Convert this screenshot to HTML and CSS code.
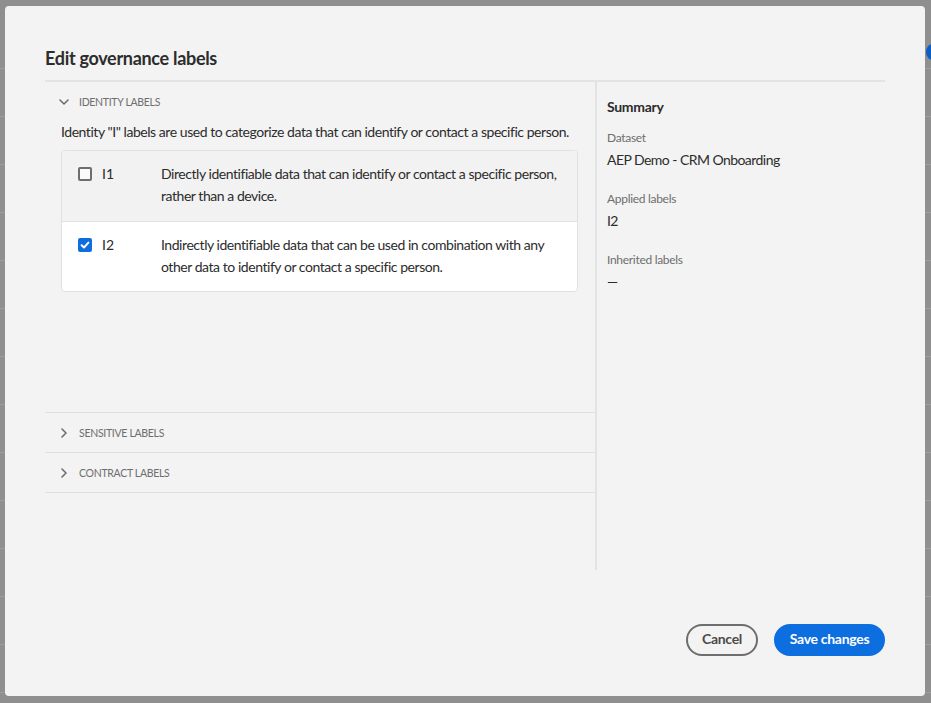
FILE: index.html
```html
<!DOCTYPE html>
<html lang="en">
<head>
<meta charset="utf-8">
<title>Edit governance labels</title>
<link rel="stylesheet" href="styles.css">
</head>
<body>
<div class="backdrop-dot"></div>
<div class="dialog">
  <h1 class="title">Edit governance labels</h1>
  <div class="content">
    <div class="labels">
      <section class="group group-open">
        <div class="group-head">
          <svg class="chev" width="10" height="10" viewBox="0 0 10 10"><path d="M1 3 L5 7 L9 3" fill="none" stroke="#6e6e6e" stroke-width="1.6" stroke-linecap="round" stroke-linejoin="round"/></svg>
          <span class="group-name">IDENTITY LABELS</span>
        </div>
        <div class="group-body">
          <p class="group-desc">Identity "I" labels are used to categorize data that can identify or contact a specific person.</p>
          <div class="table">
            <div class="row row-hover">
              <span class="check"></span>
              <span class="code">I1</span>
              <span class="desc">Directly identifiable data that can identify or contact a specific person, rather than a device.</span>
            </div>
            <div class="row">
              <span class="check check-on"><svg width="10" height="10" viewBox="0 0 10 10"><path d="M1.6 5.2 L4 7.5 L8.4 2.6" fill="none" stroke="#fff" stroke-width="1.9" stroke-linecap="round" stroke-linejoin="round"/></svg></span>
              <span class="code">I2</span>
              <span class="desc">Indirectly identifiable data that can be used in combination with any other data to identify or contact a specific person.</span>
            </div>
          </div>
        </div>
      </section>
      <section class="group">
        <div class="group-head">
          <svg class="chev" width="10" height="10" viewBox="0 0 10 10"><path d="M3 1 L7 5 L3 9" fill="none" stroke="#6e6e6e" stroke-width="1.6" stroke-linecap="round" stroke-linejoin="round"/></svg>
          <span class="group-name">SENSITIVE LABELS</span>
        </div>
      </section>
      <section class="group">
        <div class="group-head">
          <svg class="chev" width="10" height="10" viewBox="0 0 10 10"><path d="M3 1 L7 5 L3 9" fill="none" stroke="#6e6e6e" stroke-width="1.6" stroke-linecap="round" stroke-linejoin="round"/></svg>
          <span class="group-name">CONTRACT LABELS</span>
        </div>
      </section>
    </div>
    <aside class="summary">
      <h2 class="summary-title">Summary</h2>
      <div class="field">
        <div class="field-label">Dataset</div>
        <div class="field-value">AEP Demo - CRM Onboarding</div>
      </div>
      <div class="field">
        <div class="field-label">Applied labels</div>
        <div class="field-value">I2</div>
      </div>
      <div class="field">
        <div class="field-label">Inherited labels</div>
        <div class="field-value">—</div>
      </div>
    </aside>
  </div>
  <div class="footer">
    <button class="btn btn-secondary">Cancel</button>
    <button class="btn btn-primary">Save changes</button>
  </div>
</div>
</body>
</html>
```

FILE: styles.css
```css
* { box-sizing: border-box; }

html, body {
  margin: 0;
  height: 703px;
  overflow: hidden;
}

body {
  font-family: Lato, "Open Sans", sans-serif;
  color: #2c2c2c;
  background-color: #8f8f8f;
  background-image: repeating-linear-gradient(to bottom, transparent 0 47px, #9e9e9e 47px 48px);
  background-position: 0 21px;
  display: flex;
  align-items: flex-start;
  position: relative;
}

.backdrop-dot {
  position: absolute;
  left: 926px;
  top: 44px;
  width: 14px;
  height: 16px;
  border-radius: 50%;
  background: #0b5fc4;
}

.dialog {
  width: 920px;
  height: 690px;
  margin: 6px 0 0 5px;
  background: #f3f3f3;
  border-radius: 4px;
  padding: 40px 40px 40px 40px;
  display: flex;
  flex-direction: column;
  position: relative;
  z-index: 1;
}

.title {
  margin: 0;
  font-size: 18px;
  line-height: 24px;
  font-weight: 700;
  letter-spacing: -0.3px;
  color: #2c2c2c;
  padding-bottom: 10px;
  border-bottom: 2px solid #e3e3e3;
}

.content {
  display: flex;
  height: 488px;
}

.labels {
  width: 552px;
  border-right: 2px solid #e3e3e3;
  display: flex;
  flex-direction: column;
}

.group {
  border-bottom: 1px solid #dedede;
}

.group-head {
  height: 39px;
  display: flex;
  align-items: center;
  padding-left: 14px;
  gap: 10px;
}

.group-open .group-head { height: 40px; }

.chev { flex: none; }

.group-name {
  font-size: 10.5px;
  color: #6e6e6e;
  letter-spacing: -0.3px;
}

.group-body {
  height: 290px;
  padding: 0 17px 0 16px;
}

.group-desc {
  margin: 0 0 8px;
  font-size: 14px;
  line-height: 20px;
  letter-spacing: -0.45px;
}

.table {
  border: 1px solid #e1e1e1;
  border-radius: 4px;
  background: #fff;
  overflow: hidden;
}

.row {
  display: flex;
  align-items: flex-start;
  padding: 13px 16px 13px 16px;
  border-top: 1px solid #e1e1e1;
  min-height: 70px;
}

.row:first-child { border-top: 0; }

.row-hover { background: #f2f2f2; }

.check {
  flex: none;
  width: 14px;
  height: 14px;
  margin-top: 3px;
  border: 2px solid #6e6e6e;
  border-radius: 2px;
  background: #fafafa;
  display: flex;
  align-items: center;
  justify-content: center;
}

.check-on {
  background: #0d6ee0;
  border-color: #0d6ee0;
}

.code {
  flex: none;
  width: 59px;
  margin-left: 10px;
  font-size: 14px;
  line-height: 20px;
}

.desc {
  font-size: 14px;
  line-height: 22px;
  margin-top: -1px;
  letter-spacing: -0.45px;
}

.summary {
  flex: 1;
  padding: 15px 0 0 10px;
}

.summary-title {
  margin: 0 0 12px;
  font-size: 14px;
  line-height: 20px;
  font-weight: 700;
  letter-spacing: -0.3px;
}

.field { margin-bottom: 19px; }

.field-label {
  font-size: 12px;
  line-height: 18px;
  color: #6e6e6e;
  letter-spacing: -0.3px;
}

.field-value {
  margin-top: 2px;
  font-size: 14px;
  line-height: 22px;
  letter-spacing: -0.55px;
}

.footer {
  margin-top: auto;
  display: flex;
  justify-content: flex-end;
  gap: 16px;
}

.btn {
  height: 32px;
  border-radius: 16px;
  font-family: inherit;
  font-size: 14px;
  font-weight: 700;
  letter-spacing: -0.3px;
  padding: 0 0 3px;
  white-space: nowrap;
  cursor: pointer;
}

.btn-secondary {
  background: transparent;
  border: 2px solid #6e6e6e;
  color: #4b4b4b;
  width: 72px;
}

.btn-primary {
  background: #0d6ee0;
  border: 2px solid #0d6ee0;
  color: #fff;
  width: 111px;
}
```
